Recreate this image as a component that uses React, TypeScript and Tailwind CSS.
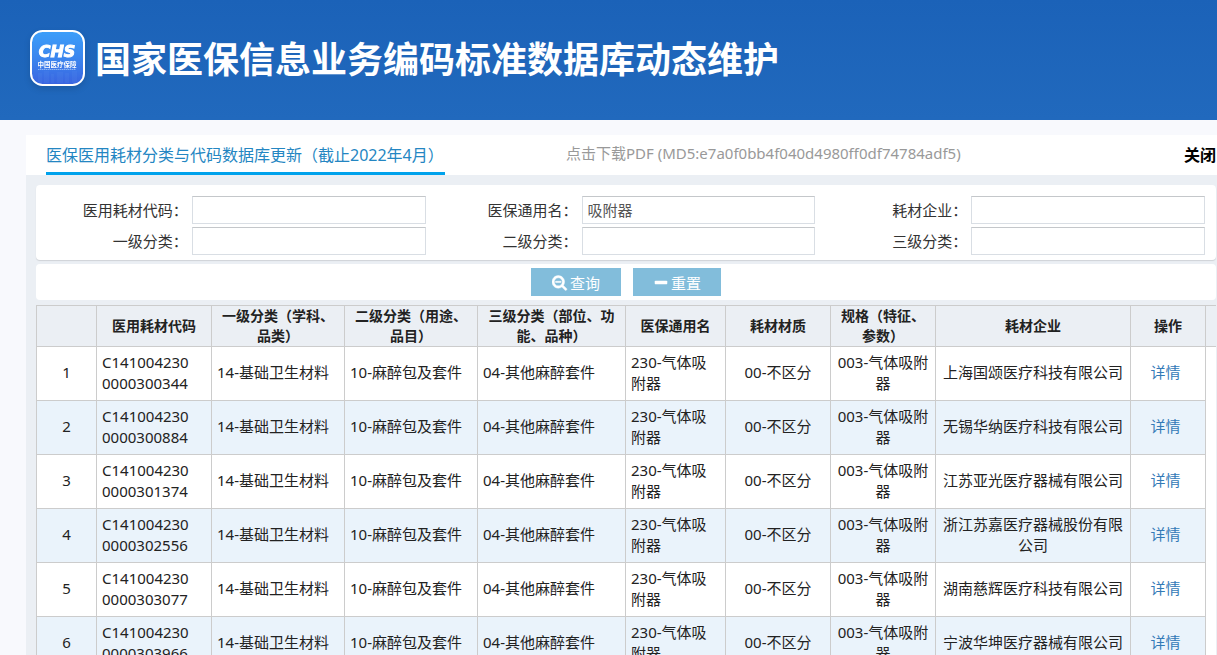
import React from 'react'

const queryFields = [
  { id: 'code', label: '医用耗材代码：', value: '' },
  { id: 'genericName', label: '医保通用名：', value: '吸附器' },
  { id: 'company', label: '耗材企业：', value: '' },
  { id: 'level1', label: '一级分类：', value: '' },
  { id: 'level2', label: '二级分类：', value: '' },
  { id: 'level3', label: '三级分类：', value: '' }
]

const columns = [
  { title: '', width: 'w-[60px]' },
  { title: '医用耗材代码', width: 'w-[115px]' },
  { title: '一级分类（学科、品类）', width: 'w-[133px]' },
  { title: '二级分类（用途、品目）', width: 'w-[133px]' },
  { title: '三级分类（部位、功能、品种）', width: 'w-[148px]' },
  { title: '医保通用名', width: 'w-[100px]' },
  { title: '耗材材质', width: 'w-[105px]' },
  { title: '规格（特征、参数）', width: 'w-[105px]' },
  { title: '耗材企业', width: 'w-[195px]' },
  { title: '操作', width: 'w-[75px]' }
]

const rows = [
  { code: 'C1410042300000300344', company: '上海国颂医疗科技有限公司' },
  { code: 'C1410042300000300884', company: '无锡华纳医疗科技有限公司' },
  { code: 'C1410042300000301374', company: '江苏亚光医疗器械有限公司' },
  { code: 'C1410042300000302556', company: '浙江苏嘉医疗器械股份有限公司' },
  { code: 'C1410042300000303077', company: '湖南慈辉医疗科技有限公司' },
  { code: 'C1410042300000303966', company: '宁波华坤医疗器械有限公司' }
]

const Logo: React.FC = () => (
  <svg className="w-[55px] h-14 shrink-0 drop-shadow-md" viewBox="0 0 110 112" aria-hidden="true">
    <defs>
      <linearGradient id="logoFill" x1="0" y1="0" x2="0" y2="1">
        <stop offset="0" stopColor="#3c9ffa" />
        <stop offset="0.5" stopColor="#3b86ee" />
        <stop offset="1" stopColor="#3963e0" />
      </linearGradient>
    </defs>
    <rect x="2" y="2" width="106" height="108" rx="23" fill="url(#logoFill)" stroke="#fff" strokeWidth="4" />
    <g fill="#5f92ef" opacity="0.15">
      <rect x="16" y="86" width="8" height="20" />
      <rect x="28" y="82" width="10" height="24" />
      <rect x="42" y="88" width="6" height="18" />
      <rect x="54" y="84" width="12" height="22" />
      <rect x="70" y="86" width="8" height="20" />
      <rect x="84" y="82" width="10" height="24" />
    </g>
    <text
      x="54" y="54" textAnchor="middle" fontSize="32" fontWeight="700" fontStyle="italic"
      fontFamily="DejaVu Sans, sans-serif" fill="#fff" stroke="#fff" strokeWidth="2"
    >
      CHS
    </text>
    <text
      x="54" y="73" textAnchor="middle" fontSize="13" fontWeight="700"
      fontFamily="Noto Sans CJK SC, sans-serif" fill="#fff"
    >
      中国医疗保障
    </text>
    <path d="M16 79H92" stroke="#a9cbfa" strokeWidth="2" strokeDasharray="3 1" opacity="0.7" />
  </svg>
)

const SearchMinusIcon: React.FC = () => (
  <svg className="w-4 h-4" viewBox="0 0 1792 1792" fill="currentColor" aria-hidden="true">
    <path d="M1024 736v64q0 13-9.5 22.5t-22.5 9.5h-576q-13 0-22.5-9.5t-9.5-22.5v-64q0-13 9.5-22.5t22.5-9.5h576q13 0 22.5 9.5t9.5 22.5zm128 32q0-185-131.5-316.5t-316.5-131.5-316.5 131.5-131.5 316.5 131.5 316.5 316.5 131.5 316.5-131.5 131.5-316.5zm512 832q0 53-37.5 90.5t-90.5 37.5q-54 0-90-38l-343-342q-179 124-399 124-143 0-273.5-55.5t-225-150-150-225-55.5-273.5 55.5-273.5 150-225 225-150 273.5-55.5 273.5 55.5 225 150 150 225 55.5 273.5q0 220-124 399l343 343q37 37 37 90z" stroke="currentColor" strokeWidth="50" />
  </svg>
)

const MinusIcon: React.FC = () => (
  <svg className="w-4 h-4" viewBox="0 0 1792 1792" fill="currentColor" aria-hidden="true">
    <path d="M1600 736v192q0 40-28 68t-68 28h-1216q-40 0-68-28t-28-68v-192q0-40 28-68t68-28h1216q40 0 68 28t28 68z" />
  </svg>
)

const QueryForm: React.FC = () => (
  <form onSubmit={(e) => e.preventDefault()}>
    <div className="grid grid-cols-3 gap-y-[3px] rounded bg-white pt-[11px] pb-[5px] pr-[11px] shadow-[0_1px_1px_rgba(0,0,0,0.12)]">
      {queryFields.map((field) => (
        <div key={field.id} className="flex items-center">
          <label htmlFor={field.id} className="w-2/5 pr-1 text-right">
            {field.label}
          </label>
          <input
            id={field.id}
            type="text"
            defaultValue={field.value}
            className="w-3/5 h-7 px-[5px] pb-0.5 border border-[#d9dee4] border-t-[#c4c7ca] bg-white text-[#555] outline-none"
          />
        </div>
      ))}
    </div>
    <div className="mt-1 flex justify-center gap-3 rounded bg-white py-1">
      <button type="submit" className="flex h-7 w-[90px] items-center justify-center gap-0.5 bg-[#82bddb] pt-0.5 text-white">
        <SearchMinusIcon />
        <span>查询</span>
      </button>
      <button type="reset" className="flex h-7 w-[88px] items-center justify-center gap-0.5 bg-[#82bddb] pt-0.5 text-white">
        <MinusIcon />
        <span>重置</span>
      </button>
    </div>
  </form>
)

const ResultTable: React.FC = () => {
  return (
    <table className="mt-[5px] w-full table-fixed border-collapse bg-white leading-[21px] text-[#222]">
      <thead>
        <tr className="h-[41px] bg-[#ebeff4] text-sm leading-5">
          {columns.map((column, index) => (
            <th key={index} className={`${column.width} border border-[#ccc] px-1 font-bold`}>
              {column.title}
            </th>
          ))}
          <th className="border-y border-[#ccc]"></th>
        </tr>
      </thead>
      <tbody>
        {rows.map((row, index) => {
          const cell = `border border-[#ccc] pb-0.5 ${index % 2 ? 'bg-[#eaf3fb]' : ''}`

          return (
            <tr key={row.code} className="h-[54px]">
              <td className={`${cell} px-[5px] text-center`}>{index + 1}</td>
              <td className={`${cell} pl-[5px] pr-4 break-all`}>{row.code}</td>
              <td className={`${cell} px-[5px]`}>14-基础卫生材料</td>
              <td className={`${cell} px-[5px]`}>10-麻醉包及套件</td>
              <td className={`${cell} px-[5px]`}>04-其他麻醉套件</td>
              <td className={`${cell} px-[5px] break-all`}>230-气体吸附器</td>
              <td className={`${cell} px-[5px] text-center`}>00-不区分</td>
              <td className={`${cell} px-[5px] text-center break-all`}>003-气体吸附器</td>
              <td className={`${cell} px-[5px] text-center`}>{row.company}</td>
              <td className={`${cell} pr-[5px] text-center`}>
                <a href="#detail" className="text-[#337ab7] hover:underline">详情</a>
              </td>
              <td></td>
            </tr>
          )
        })}
      </tbody>
    </table>
  )
}

const App: React.FC = () => {
  return (
    <div
      lang="zh-CN"
      className="min-h-screen bg-[#f8f9fd] font-['Noto_Sans','Noto_Sans_CJK_SC',sans-serif] text-[15px] leading-5 text-[#333]"
    >
      <header className="flex h-[120px] items-center bg-linear-to-b from-[#1b62b8] to-[#2169bd] pb-1 pl-[30px]">
        <Logo />
        <h1 className="ml-2.5 pt-1 text-4xl font-bold text-white">国家医保信息业务编码标准数据库动态维护</h1>
      </header>

      <main className="mt-[15px] ml-[26px]">
        <div className="flex h-10 bg-white pl-5">
          <h2 className="w-[399px] border-b-3 border-[#00a2ec] pt-2.5 text-base leading-5 text-[#2486c2]">
            医保医用耗材分类与代码数据库更新（截止2022年4月）
          </h2>
          <a href="#pdf" className="ml-[121px] pt-2 text-[#999]">
            点击下载PDF (MD5:e7a0f0bb4f040d4980ff0df74784adf5)
          </a>
          <button type="button" className="ml-auto h-10 pr-px text-base font-bold text-black">
            关闭
          </button>
        </div>

        <div className="bg-[#ebeff4] pt-2.5 pl-2.5 pr-px">
          <QueryForm />
          <ResultTable />
        </div>
      </main>
    </div>
  )
}

export default App
